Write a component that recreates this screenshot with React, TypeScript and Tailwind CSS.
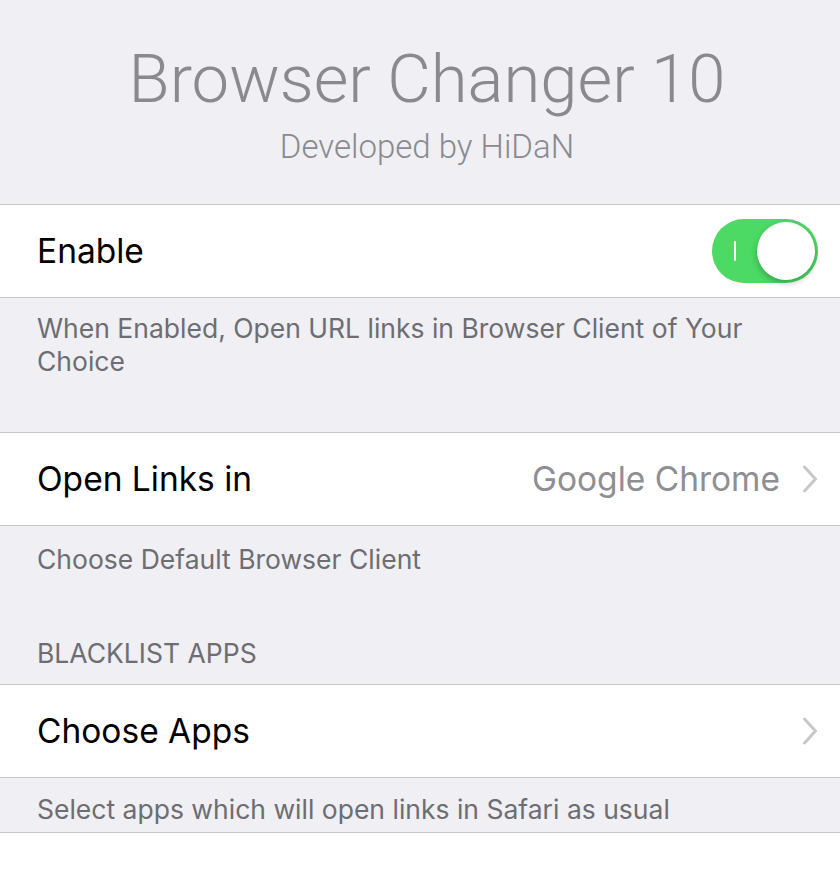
import React from "react";

const Chevron = () => (
  <svg width="16" height="28" viewBox="0 0 16 28" fill="none">
    <path d="M2.5 2 L13.5 14 L2.5 26" stroke="#c7c7cc" strokeWidth="3" strokeLinecap="round" strokeLinejoin="round" />
  </svg>
);

const Toggle = () => (
  <div className="relative w-[106px] h-[64px] rounded-full bg-[#4cd964]">
    <div className="absolute left-[22px] top-[22px] w-[2px] h-[20px] bg-white rounded" />
    <div className="absolute right-[3px] top-[3px] w-[58px] h-[58px] rounded-full bg-white shadow-[0_3px_6px_rgba(0,0,0,0.25)]" />
  </div>
);

export default function App() {
  const body = { fontFamily: "Inter, Roboto, 'Liberation Sans', sans-serif" };
  const title = { fontFamily: "Roboto, 'Liberation Sans', sans-serif" };
  return (
    <div className="w-[840px] h-[874px] bg-[#efeff4] overflow-hidden" style={body}>
      <div className="h-[204px] flex flex-col items-center pt-[44px] pl-[14px]" style={title}>
        <div className="text-[67px] leading-[70px] font-light text-[#8a8a8e]">Browser Changer 10</div>
        <div className="text-[33px] leading-[33px] font-light text-[#8a8a8e] mt-[16px]">Developed by HiDaN</div>
      </div>
      <div className="bg-white border-y border-[#c8c7cc] h-[94px] flex items-center justify-between pl-[37px] pr-[22px]">
        <span className="text-[33.5px] text-black">Enable</span>
        <Toggle />
      </div>
      <div className="h-[134px] pt-[14px] pl-[37px] pr-[60px] text-[26.5px] leading-[33px] text-[#6d6d72]">
        When Enabled, Open URL links in Browser Client of Your Choice
      </div>
      <div className="bg-white border-y border-[#c8c7cc] h-[94px] flex items-center justify-between pl-[37px] pr-[22px]">
        <span className="text-[33.5px] text-black">Open Links in</span>
        <div className="flex items-center gap-[22px]">
          <span className="text-[33.5px] text-[#8e8e93]">Google Chrome</span>
          <Chevron />
        </div>
      </div>
      <div className="pt-[16px] pl-[37px] text-[26.5px] leading-[34px] text-[#6d6d72]">Choose Default Browser Client</div>
      <div className="pt-[60px] pb-[14px] pl-[37px] text-[26.5px] leading-[34px] text-[#6d6d72]">BLACKLIST APPS</div>
      <div className="bg-white border-y border-[#c8c7cc] h-[94px] flex items-center justify-between pl-[37px] pr-[22px]">
        <span className="text-[33.5px] text-black">Choose Apps</span>
        <Chevron />
      </div>
      <div className="pt-[14px] h-[54px] pl-[37px] text-[26.5px] leading-[34px] text-[#6d6d72]">Select apps which will open links in Safari as usual</div>
      <div className="bg-white border-t border-[#c8c7cc] h-[60px]" />
    </div>
  );
}
